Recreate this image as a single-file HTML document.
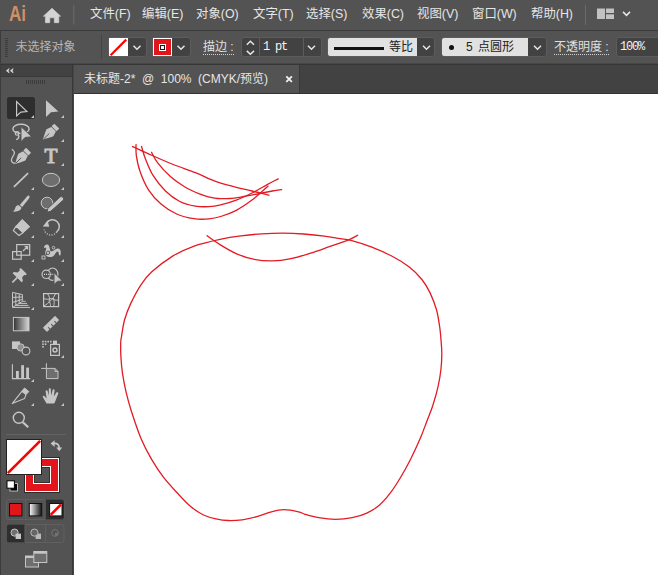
<!DOCTYPE html>
<html><head><meta charset="utf-8"><title>Ai</title>
<style>
html,body{margin:0;padding:0;}
body{width:658px;height:575px;overflow:hidden;background:#fff;position:relative;font-family:"Liberation Sans","Noto Sans CJK SC",sans-serif;color:#dcdcdc;}
.a{position:absolute;}
.t{position:absolute;white-space:nowrap;line-height:1;}
.menu{font-size:12.4px;color:#e6e6e6;top:8px;}
.cb{font-size:12px;color:#e0e0e0;top:41px;}
.dd{position:absolute;top:37px;height:20px;box-sizing:border-box;background:#424242;border:1px solid #5c5c5c;border-radius:3px;}
svg{position:absolute;left:0;top:0;}
</style></head><body>
<!-- bars -->
<div class="a" style="left:0;top:0;width:658px;height:30px;background:#535353"></div>
<div class="a" style="left:0;top:30px;width:658px;height:1px;background:#3a3a3a"></div>
<div class="a" style="left:0;top:31px;width:658px;height:32px;background:#535353"></div>
<div class="a" style="left:0;top:31px;width:1px;height:544px;background:#3c3c3c"></div>
<div class="a" style="left:0;top:63px;width:658px;height:1px;background:#474747"></div><div class="a" style="left:0;top:64px;width:658px;height:1px;background:#373737"></div>
<!-- tab bar -->
<div class="a" style="left:71px;top:65px;width:587px;height:28px;background:#424242"></div>
<div class="a" style="left:74px;top:65px;width:225px;height:28px;background:#535353"></div>
<div class="a" style="left:299px;top:65px;width:1px;height:28px;background:#383838"></div>
<div class="a" style="left:71px;top:93px;width:587px;height:1px;background:#333"></div>
<!-- tool panel -->
<div class="a" style="left:1px;top:65px;width:70.5px;height:11px;background:#424242"></div>
<div class="a" style="left:1px;top:76px;width:70.5px;height:1px;background:#3a3a3a"></div>
<div class="a" style="left:1px;top:77px;width:70.5px;height:498px;background:#535353"></div>
<div class="a" style="left:71.5px;top:65px;width:1px;height:510px;background:#383838"></div>
<div class="a" style="left:72.5px;top:65px;width:1.5px;height:510px;background:#464646"></div>
<!-- menu text -->
<div class="t" style="left:8.6px;top:2.6px;font-size:22.5px;font-weight:bold;color:#cd9068;transform:scaleX(.76);transform-origin:0 0;">Ai</div>
<div class="t menu" style="left:90px">文件(F)</div>
<div class="t menu" style="left:142px">编辑(E)</div>
<div class="t menu" style="left:196px">对象(O)</div>
<div class="t menu" style="left:253px">文字(T)</div>
<div class="t menu" style="left:306px">选择(S)</div>
<div class="t menu" style="left:362px">效果(C)</div>
<div class="t menu" style="left:417px">视图(V)</div>
<div class="t menu" style="left:472px">窗口(W)</div>
<div class="t menu" style="left:531px">帮助(H)</div>
<!-- control bar -->
<div class="t cb" style="left:15.4px;top:40.6px;color:#b6b6b6">未选择对象</div>
<div class="dd" style="left:108px;width:39px"></div>
<div class="dd" style="left:152px;width:39px"></div>
<div class="t cb" style="left:203px;border-bottom:1px dotted #d0d0d0;padding-bottom:1px">描边 :</div>
<div class="dd" style="left:241px;width:81px"></div>
<div class="a" style="left:259px;top:38px;width:1px;height:18px;background:#5c5c5c"></div>
<div class="a" style="left:303px;top:38px;width:1px;height:18px;background:#5c5c5c"></div>
<div class="t cb" style="left:263px;font-family:'Liberation Mono','Noto Sans CJK SC',monospace;font-size:12px;top:40.8px;color:#f4f4f4;letter-spacing:-1.2px">1 pt</div>
<div class="dd" style="left:327px;width:108px"></div>
<div class="a" style="left:328px;top:38px;width:89px;height:18px;background:#e1e1e1;border-radius:2px 0 0 2px"></div>
<div class="a" style="left:334px;top:47px;width:50px;height:3px;background:#111"></div>
<div class="t cb" style="left:389px;color:#222">等比</div>
<div class="dd" style="left:441px;width:106px"></div>
<div class="a" style="left:442px;top:38px;width:86px;height:18px;background:#e1e1e1;border-radius:2px 0 0 2px"></div>
<div class="a" style="left:449px;top:45px;width:5px;height:5px;border-radius:50%;background:#111"></div>
<div class="t cb" style="left:466px;color:#222">5</div>
<div class="t cb" style="left:478px;color:#222">点圆形</div>
<div class="t cb" style="left:554px;border-bottom:1px dotted #d0d0d0;padding-bottom:1px">不透明度 :</div>
<div class="dd" style="left:616px;width:50px"></div>
<div class="t cb" style="left:620px;font-family:'Liberation Mono','Noto Sans CJK SC',monospace;font-size:12px;top:40.8px;color:#f4f4f4;letter-spacing:-1.2px">100%</div>
<!-- tab text -->
<div class="t" style="left:84px;top:73px;font-size:12px;color:#e6e6e6;word-spacing:3.3px">未标题-2* @ 100% (CMYK/预览)</div>
<svg width="658" height="575" viewBox="0 0 658 575">
<g fill="none" stroke="#e31b23" stroke-width="1.3"><path d="M220.0 239.4C227.9 237.7 233.9 236.8 240.9 235.9C247.9 235.0 254.9 234.2 261.8 233.8C268.8 233.4 275.7 233.2 282.6 233.2C289.6 233.2 296.5 233.5 303.5 234.0C310.5 234.5 318.3 235.3 324.4 236.1C330.5 236.9 335.6 237.9 340.0 238.6C344.4 239.3 345.6 238.9 350.9 240.3C356.2 241.7 364.9 244.4 371.8 247.1C378.8 249.8 386.4 253.2 392.6 256.5C398.9 259.8 404.4 263.2 409.3 267.0C414.2 270.8 418.4 275.1 421.9 279.5C425.4 283.9 427.8 288.1 430.2 293.1C432.6 298.2 434.9 304.2 436.5 309.8C438.1 315.4 438.9 321.6 439.7 327.0C440.5 332.4 440.8 337.8 441.2 342.5C441.6 347.2 441.9 350.6 441.8 355.1C441.8 359.6 441.5 364.5 440.9 369.7C440.3 374.9 439.4 380.5 438.1 386.4C436.8 392.3 434.8 399.3 432.9 405.2C431.0 411.1 428.7 416.3 426.6 421.9C424.5 427.4 422.9 432.3 420.2 438.5C417.5 444.7 413.9 452.6 410.6 459.2C407.3 465.8 403.7 472.2 400.2 478.0C396.7 483.8 393.3 489.2 389.8 493.7C386.3 498.2 383.1 502.0 379.3 505.2C375.5 508.4 371.3 511.0 366.8 513.1C362.3 515.2 357.4 516.7 352.2 517.7C347.0 518.8 341.1 519.4 335.5 519.4C329.9 519.4 323.9 518.6 318.8 517.7C313.7 516.9 308.4 515.3 305.0 514.3C301.6 513.3 302.1 512.6 298.6 511.8C295.1 511.0 288.4 509.7 283.9 509.7C279.4 509.7 275.9 510.6 271.4 511.8C266.9 513.0 261.7 515.3 256.8 516.6C251.9 517.9 247.0 519.1 242.2 519.8C237.4 520.4 232.6 520.6 228.2 520.5C223.8 520.4 220.1 519.8 216.0 518.9C211.9 518.0 207.7 517.0 203.5 515.0C199.3 513.0 195.2 510.2 191.0 506.8C186.8 503.4 183.0 499.2 178.5 494.3C174.0 489.4 168.3 483.4 163.8 477.6C159.3 471.8 155.4 465.8 151.6 459.3C147.8 452.8 144.4 446.6 141.0 438.5C137.6 430.4 133.8 418.7 131.3 411.0C128.8 403.3 127.6 398.5 126.1 392.2C124.6 385.9 123.4 379.3 122.5 373.4C121.6 367.5 121.2 361.8 120.9 356.7C120.6 351.6 120.6 346.4 120.7 343.0C120.8 339.6 120.8 340.4 121.5 336.5C122.2 332.6 123.0 325.4 124.6 319.8C126.2 314.2 128.1 309.0 130.9 303.1C133.7 297.2 137.8 289.5 141.3 284.3C144.8 279.1 146.6 276.5 151.8 271.8C157.0 267.1 165.7 260.4 172.6 256.1C179.5 251.9 185.6 249.1 193.5 246.3C201.4 243.5 212.1 241.1 220.0 239.4Z"/><path d="M206.6 235.3C208.8 236.9 215.0 241.5 220.0 244.6C225.0 247.7 231.1 251.4 236.7 253.8C242.3 256.2 247.5 258.0 253.4 259.2C259.3 260.4 265.9 261.0 272.2 260.9C278.5 260.8 284.7 259.9 291.0 258.6C297.3 257.4 303.5 255.4 309.8 253.4C316.1 251.4 322.1 249.2 328.6 246.9C335.1 244.6 343.9 241.8 348.8 239.8C353.7 237.8 356.6 235.8 358.2 235.0"/><path d="M132.0 146.3C134.8 147.6 141.8 150.9 148.5 153.8C155.2 156.8 164.2 160.9 172.0 164.0C179.8 167.1 189.1 170.1 195.4 172.6C201.7 175.1 205.8 177.4 210.0 179.2C214.2 181.0 216.3 181.8 220.7 183.2C225.1 184.5 231.1 186.0 236.3 187.3C241.5 188.6 246.5 189.7 252.0 191.0C257.5 192.3 266.6 194.7 269.5 195.4"/><path d="M136.0 144.1C136.1 146.0 135.7 150.8 136.3 155.3C137.0 159.8 137.9 165.2 139.9 171.0C141.9 176.8 145.0 184.3 148.5 189.8C152.0 195.3 156.3 199.9 161.0 203.9C165.7 207.9 171.2 211.5 176.7 214.0C182.2 216.5 188.5 217.9 193.9 218.7C199.3 219.5 204.5 219.3 209.0 218.9C213.5 218.5 216.1 217.9 220.7 216.5C225.2 215.1 231.1 213.0 236.3 210.3C241.5 207.6 247.6 203.4 252.0 200.1C256.4 196.8 260.2 193.1 262.9 190.7C265.6 188.3 267.5 186.5 268.4 185.7"/><path d="M141.4 146.0C142.1 148.1 143.3 153.6 145.3 158.5C147.3 163.4 149.8 170.2 153.2 175.7C156.6 181.2 161.3 187.0 165.7 191.3C170.1 195.6 174.9 199.0 179.8 201.5C184.8 204.0 190.5 205.3 195.4 206.2C200.3 207.0 204.8 206.8 209.0 206.6C213.2 206.4 216.1 205.9 220.7 204.8C225.2 203.7 231.1 202.1 236.3 200.1C241.5 198.1 246.8 195.6 252.0 193.0C257.2 190.4 263.2 186.8 267.6 184.4C272.0 182.0 276.8 179.6 278.6 178.6"/><path d="M151.3 151.9C152.4 153.8 154.7 159.1 157.9 163.2C161.1 167.3 166.0 172.6 170.4 176.5C174.8 180.4 179.6 183.8 184.5 186.7C189.4 189.6 195.8 192.4 200.1 194.2C204.3 195.9 207.1 196.5 210.0 197.2C212.9 197.9 214.2 198.3 217.5 198.5C220.8 198.7 225.6 198.8 230.0 198.5C234.4 198.2 239.1 197.3 244.1 196.5C249.1 195.7 255.1 194.4 259.8 193.5C264.5 192.6 268.6 191.7 272.3 191.0C276.0 190.3 280.6 189.8 282.2 189.6"/></g>
<style>.f{fill:#c6c6c6;stroke:none}.s{fill:none;stroke:#c6c6c6;stroke-width:1.2}.m{fill:#6e6e6e;stroke:#c6c6c6;stroke-width:1}.b{fill:#535353;stroke:none}</style>
<path fill="#d4d4d4" stroke="#d4d4d4" stroke-width="0.6" stroke-linejoin="round" d="M52 8.2 L60.6 16.2 L58.8 16.2 L58.8 22.7 L54.3 22.7 L54.3 17.8 L49.8 17.8 L49.8 22.7 L45.4 22.7 L45.4 16.2 L43.4 16.2 Z"/>
<rect x="73.2" y="5" width="1.2" height="19.5" fill="#686868"/>
<rect x="585" y="5" width="1" height="20" fill="#6a6a6a"/>
<rect x="597" y="8.5" width="8" height="10.5" fill="#c2c2c2"/><rect x="606" y="8.5" width="8" height="4.5" fill="#c2c2c2"/><rect x="606" y="14.3" width="8" height="4.7" fill="#c2c2c2"/>
<path d="M623.0 11.9 L626.5 15.4 L630.0 11.9" fill="none" stroke="#e6e6e6" stroke-width="1.5"/>
<rect x="5" y="38" width="3" height="1" fill="#3c3c3c"/>
<rect x="5" y="40" width="3" height="1" fill="#3c3c3c"/>
<rect x="5" y="42" width="3" height="1" fill="#3c3c3c"/>
<rect x="5" y="44" width="3" height="1" fill="#3c3c3c"/>
<rect x="5" y="46" width="3" height="1" fill="#3c3c3c"/>
<rect x="5" y="48" width="3" height="1" fill="#3c3c3c"/>
<rect x="5" y="50" width="3" height="1" fill="#3c3c3c"/>
<rect x="5" y="52" width="3" height="1" fill="#3c3c3c"/>
<rect x="5" y="54" width="3" height="1" fill="#3c3c3c"/>
<rect x="5" y="56" width="3" height="1" fill="#3c3c3c"/>
<rect x="101" y="35" width="1" height="24" fill="#444"/>
<rect x="109" y="38" width="19" height="18" fill="#fff"/><path d="M110.6 55.2 L126.2 39.6" stroke="#ff0000" stroke-width="2.2"/>
<path d="M133.5 45.8 L137.0 49.2 L140.5 45.8" fill="none" stroke="#e6e6e6" stroke-width="1.5"/>
<rect x="153" y="38" width="19" height="18" fill="#fff"/><rect x="154" y="39" width="17" height="16" fill="#e2141c"/><rect x="159" y="44" width="7" height="7" fill="#fff"/><rect x="160" y="45" width="5" height="5" fill="#1a1a1a"/><rect x="161" y="46" width="3" height="3" fill="#f4f4f4"/>
<path d="M177.5 45.8 L181.0 49.2 L184.5 45.8" fill="none" stroke="#e6e6e6" stroke-width="1.5"/>
<path d="M246.8 44.7 L250.4 41.3 L254.0 44.7" fill="none" stroke="#e6e6e6" stroke-width="1.5"/>
<path d="M246.8 50.9 L250.4 54.3 L254.0 50.9" fill="none" stroke="#e6e6e6" stroke-width="1.5"/>
<path d="M308.0 45.8 L311.5 49.2 L315.0 45.8" fill="none" stroke="#e6e6e6" stroke-width="1.5"/>
<path d="M423.0 45.8 L426.5 49.2 L430.0 45.8" fill="none" stroke="#e6e6e6" stroke-width="1.5"/>
<path d="M534.0 45.8 L537.5 49.2 L541.0 45.8" fill="none" stroke="#e6e6e6" stroke-width="1.5"/>
<path d="M286.3 76.3 L291.9 81.9 M291.9 76.3 L286.3 81.9" stroke="#f0f0f0" stroke-width="1.8"/>
<path d="M9.2 68.5 L6.2 70.7 L9.2 72.9 L8.4 70.7 Z M13.2 68.5 L10.2 70.7 L13.2 72.9 L12.4 70.7 Z" fill="#dcdcdc" stroke="#dcdcdc" stroke-width="0.5" stroke-linejoin="round"/>
<rect x="26" y="80" width="1" height="4" fill="#3c3c3c"/>
<rect x="28" y="80" width="1" height="4" fill="#3c3c3c"/>
<rect x="30" y="80" width="1" height="4" fill="#3c3c3c"/>
<rect x="32" y="80" width="1" height="4" fill="#3c3c3c"/>
<rect x="34" y="80" width="1" height="4" fill="#3c3c3c"/>
<rect x="36" y="80" width="1" height="4" fill="#3c3c3c"/>
<rect x="38" y="80" width="1" height="4" fill="#3c3c3c"/>
<rect x="40" y="80" width="1" height="4" fill="#3c3c3c"/>
<rect x="42" y="80" width="1" height="4" fill="#3c3c3c"/>
<rect x="44" y="80" width="1" height="4" fill="#3c3c3c"/>
<rect x="7" y="97" width="28" height="22" rx="2.5" fill="#2e2e2e"/>
<path class="f" d="M34 115 L34 118 L31 118 Z"/>
<path class="f" d="M64 115 L64 118 L61 118 Z"/>
<path class="f" d="M64 139 L64 142 L61 142 Z"/>
<path class="f" d="M64 163 L64 166 L61 166 Z"/>
<path class="f" d="M34 187 L34 190 L31 190 Z"/>
<path class="f" d="M64 187 L64 190 L61 190 Z"/>
<path class="f" d="M34 211 L34 214 L31 214 Z"/>
<path class="f" d="M64 211 L64 214 L61 214 Z"/>
<path class="f" d="M34 235 L34 238 L31 238 Z"/>
<path class="f" d="M64 235 L64 238 L61 238 Z"/>
<path class="f" d="M34 259 L34 262 L31 262 Z"/>
<path class="f" d="M64 259 L64 262 L61 262 Z"/>
<path class="f" d="M34 283 L34 286 L31 286 Z"/>
<path class="f" d="M64 283 L64 286 L61 286 Z"/>
<path class="f" d="M34 307 L34 310 L31 310 Z"/>
<path class="f" d="M64 355 L64 358 L61 358 Z"/>
<path class="f" d="M34 379 L34 382 L31 382 Z"/>
<path class="f" d="M34 403 L34 406 L31 406 Z"/>
<path class="f" d="M64 403 L64 406 L61 406 Z"/>
<path class="s" stroke-linejoin="miter" d="M16.6 101.6 L16.6 116 L20.9 112.1 L26.9 111.6 Z"/>
<path class="f" d="M46 100.2 L46 117 L51 112.2 L58.4 111.6 Z"/>
<ellipse class="s" style="stroke-width:1.4" cx="21" cy="128.9" rx="8.1" ry="4.6"/>
<circle class="s" style="stroke-width:1.2" cx="17.1" cy="133.4" r="1.8"/>
<path class="s" style="stroke-width:1.4" d="M18.5 135 C19.3 137 18.4 139 16.2 139.7"/>
<path class="f" d="M21 126.6 L21 141.8 L25 137.5 L31.8 136.8 Z" style="stroke:#535353;stroke-width:1"/>
<g transform="translate(43.2,139.4) rotate(45.6) scale(1.00)">
<path class="f" d="M0 0.3 C-1.6 -2.6 -3.6 -6 -4.9 -9.4 L-3.3 -14.5 L3.3 -14.5 L4.9 -9.4 C3.6 -6 1.6 -2.6 0 0.3Z"/>
<rect class="f" x="-3.5" y="-19" width="7" height="3.9" rx="0.4"/>
<path d="M0 -0.8 L0 -8.4" stroke="#535353" stroke-width="0.9"/>
</g>
<g transform="translate(15.3,163.8) rotate(44.4) scale(1.00)">
<path class="f" d="M0 0.3 C-1.6 -2.6 -3.6 -6 -4.9 -9.4 L-3.3 -14.5 L3.3 -14.5 L4.9 -9.4 C3.6 -6 1.6 -2.6 0 0.3Z"/>
<rect class="f" x="-3.5" y="-19" width="7" height="3.9" rx="0.4"/>
<path d="M0 -0.8 L0 -8.4" stroke="#535353" stroke-width="0.9"/>
</g>
<path class="s" style="stroke-width:1.3" d="M11.9 149.2 C13 150.2 14.6 151 14.4 153 C14 156 11.2 157.6 11.4 160.2 C11.6 162.2 13 163 14.8 163.5"/>
<text x="51" y="162.6" text-anchor="middle" font-family="Liberation Serif, serif" font-size="20" fill="#c6c6c6" stroke="#c6c6c6" stroke-width="1" transform="translate(51 0) scale(1.06 1) translate(-51 0)">T</text>
<path d="M13.9 186.8 L28.1 173.2" stroke="#c6c6c6" stroke-width="1.7" fill="none"/>
<ellipse class="m" cx="51" cy="179.9" rx="8.6" ry="6.6"/>
<path class="f" d="M29.2 195.8 C30 196.6 29.6 197.6 29 198.4 L22.2 207 L19.8 205 L27 196.6 C27.7 195.8 28.5 195.3 29.2 195.8Z"/>
<path class="f" d="M19 205.4 L21.4 207.6 C21.2 210.6 17.5 212 12.8 211.6 C15 210.4 14.8 208.6 15.6 207 C16.4 205.6 17.8 205 19 205.4Z"/>
<circle class="m" cx="47" cy="203" r="5.8"/>
<path class="f" style="stroke:#535353;stroke-width:1" d="M59.8 197.2 C60.8 196.3 62.2 196.5 63 197.4 C63.9 198.4 63.8 199.7 62.9 200.5 L50.8 211.2 L47.2 212.3 L47.8 208.4 Z"/>
<path class="f" stroke-linejoin="round" style="stroke:#c6c6c6;stroke-width:1" d="M22.2 219.4 L29.7 226.8 L23.2 232.6 L16 226.2 Z"/>
<path class="s" stroke-linejoin="round" d="M16 226.2 L23.2 232.6 L19 235.6 L13.3 230.5 Z"/>
<path class="s" style="stroke-width:1.5" d="M46.6 223.2 A6.8 6.8 0 1 1 56.6 232"/>
<path class="s" style="stroke-width:1.4" stroke-dasharray="1 1.5" d="M56.6 232 A6.8 6.8 0 0 1 44.3 229.6"/>
<path class="f" d="M42.8 226.6 L47.6 220.6 L49.2 226.8 Z"/>
<rect class="s" x="16.7" y="244.6" width="13" height="10.6"/><rect class="s" x="12.6" y="251.6" width="8.6" height="7.6"/>
<path class="s" d="M23 251 L27.4 246.8 M24.6 246.6 L27.6 246.6 L27.6 249.6"/>
<path class="f" d="M44 248.2 C43.8 246 45.2 244.4 47 244.4 C48.6 244.4 49.2 246 49.6 248 C50 250 50.6 251.4 52 251.2 C54 250.8 55.4 248.6 57.6 248.4 C59.8 248.2 60.8 250.2 60.8 252.4 C60.8 253.8 60.6 254.8 60.2 255.4 L59 255.2 C58.9 253.6 58.6 251.8 57.6 251.6 C56.4 251.4 55.6 253.6 54 255.4 C52.6 256.8 50.6 257.4 48.6 257 C46.4 256.6 45.2 254.8 45.2 252.6 C45.2 250.8 46.4 249.6 46.2 248.4 C46 247.4 45 247.4 44 248.2Z"/>
<path d="M43.6 257.4 L53.4 247.8" stroke="#535353" stroke-width="1"/>
<rect x="42" y="256" width="3" height="3" fill="#535353" stroke="#c6c6c6" stroke-width="0.9"/><circle cx="53.5" cy="247.7" r="1.3" fill="#535353" stroke="#c6c6c6" stroke-width="0.9"/><circle cx="48" cy="252.8" r="1.7" fill="#c6c6c6" stroke="#535353" stroke-width="0.9"/>
<g transform="translate(12.3,282.5) rotate(45) scale(1.1)"><path class="f" d="M-3.6 -14.8 L3.6 -14.8 L4.2 -13.4 L2.9 -12.4 L2.9 -9.8 L5.8 -7.8 L5.8 -6.2 L-5.8 -6.2 L-5.8 -7.8 L-2.9 -9.8 L-2.9 -12.4 L-4.2 -13.4Z"/><path d="M0 -6.2 L0 0" stroke="#c6c6c6" stroke-width="1.6"/></g>
<ellipse class="s" cx="52.6" cy="274.2" rx="5.3" ry="6.2"/>
<circle cx="46.2" cy="274.3" r="4.2" fill="#535353" stroke="#c6c6c6" stroke-width="1.2"/>
<path d="M50.4 272.2 A4.2 4.2 0 0 1 50.4 276.6" fill="none" stroke="#8a8a8a" stroke-width="1.1"/>
<path fill="none" stroke="#e0e0e0" stroke-width="1.1" stroke-dasharray="1 1.1" d="M44 274.4 L53.4 274.4"/>
<path class="f" style="stroke:#535353;stroke-width:1" d="M54 272.6 L54 284.6 L57.4 281.4 L62.4 280.9 Z"/>
<path class="s" style="stroke-width:1" d="M12.5 292.4 L12.5 307.4 L22.4 301.4 L22.4 294.6 Z M12.5 297.4 L22.4 297 M12.5 302.4 L22.4 299.4 M15.8 293.2 L15.8 305.4 M19.2 293.8 L19.2 303.4 M12.5 307.4 L30 307.4 M15.6 305.4 L28.4 305.4 M19 303.4 L27 303.4 M22 301.4 L25.6 301.4"/>
<path d="M22.4 299.6 L25 301.6 L22.4 301.6Z" fill="#8a8a8a"/>
<rect class="s" x="43.6" y="293.6" width="15" height="13"/>
<path class="s" style="stroke-width:1" d="M44 306 C49 303 53 299 55.6 293.8 M47.6 293.8 C49.6 296.4 50 298.6 49 301.6 M44 298.6 C46.4 299.6 48.4 299.4 51.6 298.4 M51.6 298.4 C54 300 56 300.4 58.4 300 M49.6 302 C50.4 303.6 50.6 305 50.4 306.4 M53.4 298 C54.4 301 54.4 304 53.6 306.4"/>
<defs><linearGradient id="g1" x1="0" x2="1" y1="0" y2="0"><stop offset="0" stop-color="#333"/><stop offset="1" stop-color="#d8d8d8"/></linearGradient><linearGradient id="g2" x1="0" x2="1" y1="0" y2="0"><stop offset="0" stop-color="#fff"/><stop offset="1" stop-color="#111"/></linearGradient></defs>
<rect x="13.4" y="317.4" width="15.6" height="13.4" fill="url(#g1)" stroke="#c6c6c6" stroke-width="1"/>
<g transform="translate(51,323.9) rotate(-44.5)"><rect class="f" x="-8.5" y="-2.9" width="17" height="5.8" rx="0.6"/><path d="M-4.4 3 L-4.4 0.4 M0 3 L0 0.4 M4.4 3 L4.4 0.4" stroke="#535353" stroke-width="1"/></g>
<rect class="f" x="12" y="341.4" width="8" height="7.6"/><circle cx="20.6" cy="347.4" r="3.6" fill="#8e8e8e" stroke="#c6c6c6" stroke-width="1"/><circle cx="26" cy="351" r="3.9" fill="#535353" stroke="#c6c6c6" stroke-width="1.1"/>
<rect class="s" x="50.6" y="344.4" width="8.8" height="11" style="stroke-width:1.2"/><rect class="f" x="53" y="340.6" width="4" height="3.8"/><circle cx="55" cy="350" r="2" class="s" style="stroke-width:1.4"/>
<rect class="f" x="42.2" y="340.8" width="1.6" height="1.6"/>
<rect class="f" x="44.8" y="340.8" width="1.6" height="1.6"/>
<rect class="f" x="47.4" y="340.8" width="1.6" height="1.6"/>
<rect class="f" x="42.2" y="343.4" width="1.6" height="1.6"/>
<rect class="f" x="44.8" y="343.4" width="1.6" height="1.6"/>
<rect class="f" x="42.2" y="346.0" width="1.6" height="1.6"/>
<rect class="f" x="50.0" y="340.8" width="1.6" height="1.6"/>
<path class="s" style="stroke-width:1.1" d="M12.4 364.2 L12.4 378.6 L30.2 378.6"/>
<rect class="f" x="16" y="371" width="2.8" height="7.6"/><rect class="f" x="21.2" y="365.2" width="2.8" height="13.4"/><rect class="f" x="26.2" y="367.6" width="2.8" height="11"/>
<path class="s" style="stroke-width:1" d="M41.2 368.4 L46.4 368.4 M46.4 363.2 L46.4 368.4"/>
<path class="m" d="M46.4 368.4 L55 368.4 L58 371.4 L58 378.6 L46.4 378.6 Z"/><path class="s" style="stroke-width:1" d="M55 368.4 L55 371.4 L58 371.4"/>
<path class="s" stroke-linejoin="round" style="stroke-width:1.1" d="M12.2 403.6 L21.9 391.4 L26 394.6 L24.6 398.4 Z"/>
<path class="f" stroke-linejoin="round" style="stroke:#c6c6c6;stroke-width:1" d="M21.9 391.2 L24.5 388 L28.8 391.6 L26.2 394.4 Z"/>
<path class="f" d="M46.6 403.4 C45.2 401.4 44 399 42.8 397 C42.4 396 43.6 395.2 44.6 396.2 L46.6 398.6 L45.6 391.4 C45.4 390.2 47.2 389.8 47.6 391 L48.8 395.6 L48.8 389.4 C48.8 388 50.8 388 50.8 389.4 L51.2 395.4 L52.6 390 C53 388.8 54.8 389.2 54.6 390.6 L53.8 396.4 L56.4 392.6 C57.2 391.6 58.8 392.4 58.2 393.8 C57 396.6 56.4 398.6 55.6 400.6 C55 402.2 54.6 403 54 403.6 Z"/>
<circle class="s" cx="18.8" cy="417.8" r="5.5" style="stroke-width:1.4"/><path d="M22.9 422.2 L28.2 427.2" stroke="#c6c6c6" stroke-width="2.2" fill="none"/>
<rect x="6" y="434" width="60" height="1" fill="#636363"/>
<rect x="24.5" y="457.5" width="35" height="35" fill="#e2141c" stroke="#2a2a2a" stroke-width="1"/>
<rect x="25.5" y="458.5" width="33" height="33" fill="none" stroke="#fff" stroke-width="1"/>
<rect x="33.5" y="466.5" width="17" height="17" fill="#535353" stroke="#fff" stroke-width="1"/>
<rect x="34.5" y="467.5" width="15" height="15" fill="none" stroke="#333" stroke-width="1"/>
<rect x="6.5" y="439.5" width="35" height="35" fill="#fff" stroke="#222" stroke-width="1"/>
<path d="M7.8 473.2 L40.2 440.8" stroke="#ff0000" stroke-width="2.6"/>
<rect x="10" y="483.6" width="7.4" height="7.4" fill="#000" stroke="#ddd" stroke-width="0.8"/><rect x="7" y="480.8" width="7.4" height="7.4" fill="#fff" stroke="#000" stroke-width="1"/>
<path class="s" style="stroke-width:1.8" d="M53.6 443.4 C57.4 442.8 59.2 445 59.2 448.2"/><path class="f" d="M50.6 443.6 L54.6 440.2 L54.6 447 Z M56.2 447.4 L62.2 447.4 L59.2 451.2Z"/>
<rect x="6.5" y="499.5" width="57.5" height="20" rx="2.5" fill="#535353" stroke="#606060" stroke-width="1"/>
<path d="M45.2 499.5 L61.5 499.5 Q64 499.5 64 502 L64 517 Q64 519.5 61.5 519.5 L45.2 519.5 Z" fill="#2e2e2e"/>
<path d="M25.7 500 L25.7 519 M45.2 500 L45.2 519" stroke="#606060" stroke-width="1"/>
<rect x="9.5" y="503.5" width="12.4" height="12.4" fill="#e2141c" stroke="#111" stroke-width="1"/>
<rect x="29.3" y="503.5" width="12.4" height="12.4" fill="url(#g2)" stroke="#111" stroke-width="1"/>
<rect x="49.6" y="503.5" width="12.4" height="12.4" fill="#fff" stroke="#111" stroke-width="1"/><path d="M50.6 514.9 L61 504.5" stroke="#f00" stroke-width="2.6"/>
<rect x="6.8" y="524.5" width="57.2" height="18" rx="2.5" fill="#535353" stroke="#606060" stroke-width="1"/>
<path d="M25 524.5 L9.3 524.5 Q6.8 524.5 6.8 527 L6.8 540 Q6.8 542.5 9.3 542.5 L25 542.5 Z" fill="#2e2e2e"/>
<path d="M25 525 L25 542 M45.6 525 L45.6 542" stroke="#606060" stroke-width="1"/>
<circle cx="14.6" cy="532.6" r="3.6" fill="#6e6e6e" stroke="#c6c6c6" stroke-width="1"/><rect class="f" x="15.6" y="533.6" width="5.4" height="5.4"/>
<rect x="35.6" y="533.6" width="5.4" height="5.4" fill="#b8b8b8"/><circle cx="34.4" cy="532.6" r="3.6" fill="#666" stroke="#b8b8b8" stroke-width="1"/>
<circle cx="55" cy="533" r="3.4" fill="none" stroke="#747474" stroke-width="1"/><path d="M55 533 L58 533 A3 3 0 0 1 55 536 Z" fill="#747474"/>
<rect x="25.5" y="556" width="13" height="11" fill="#6e6e6e" stroke="#c6c6c6" stroke-width="1"/><rect x="25.5" y="556" width="13" height="2" fill="#c6c6c6"/>
<rect x="33.8" y="551.5" width="13" height="11" fill="#6e6e6e" stroke="#c6c6c6" stroke-width="1"/><rect x="33.8" y="551.5" width="13" height="2.2" fill="#c6c6c6"/>
</svg>
</body></html>
